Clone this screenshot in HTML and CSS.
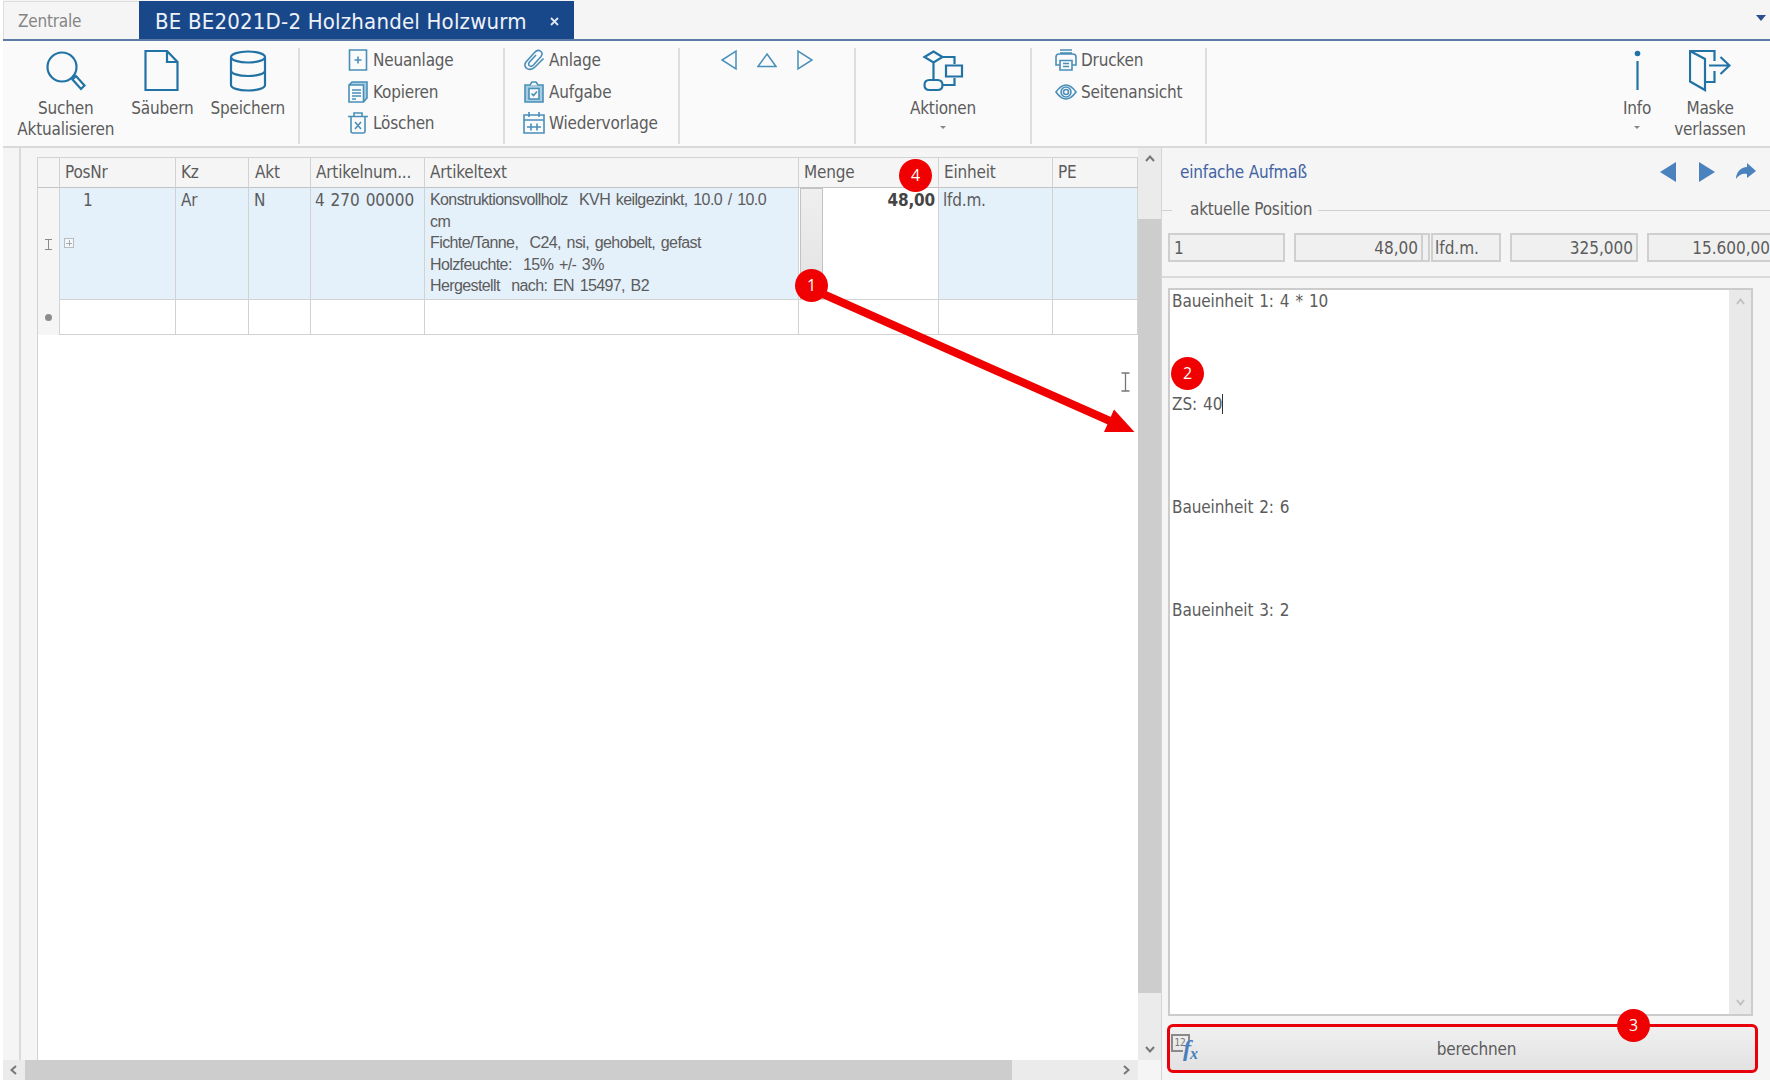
FILE: index.html
```
<!DOCTYPE html>
<html lang="de">
<head>
  <meta charset="UTF-8" />
  <meta name="viewport" content="width=device-width, initial-scale=1.0" />
  <title>BE BE2021D-2 Holzhandel Holzwurm</title>
  <link rel="stylesheet" href="styles.css">
</head>
<body>
  <nav class="tabs">
    <div class="tab">Zentrale</div>
    <div class="tab active"><span>BE BE2021D-2 Holzhandel Holzwurm</span>
      <svg class="close" width="9" height="9" viewBox="0 0 9 9"><path d="M1 1l7 7M8 1l-7 7"/></svg>
    </div>
    <svg class="tabs-menu" width="10" height="6" viewBox="0 0 10 6"><path d="M0 0h10L5 6z"/></svg>
  </nav>

  <header class="toolbar">
    <div class="group group-main">
      <button class="big b-search">
        <svg width="42" height="42" viewBox="0 0 42 42"><circle cx="17" cy="17" r="14.5"/><path d="M27.500 29.500l3.500-3.500 8.500 9.500-3.500 3.500-8.500-9.500z"/></svg>
        <span>Suchen<br>Aktualisieren</span>
      </button>
      <button class="big b-clear">
        <svg width="42" height="42" viewBox="0 0 42 42"><path d="M4.500 1H26l10.500 11v28h-32zM26 1v11h10.500"/></svg>
        <span>Säubern</span>
      </button>
      <button class="big b-save">
        <svg width="42" height="42" viewBox="0 0 42 42"><ellipse cx="21" cy="7" rx="17" ry="5.500"/><path d="M4 7v28c0 3 7 5.500 17 5.500S38 38 38 35V7M4 20.500c0 3 7 5.500 17 5.500s17-2.500 17-5.500"/></svg>
        <span>Speichern</span>
      </button>
    </div>
    <div class="group group-edit">
      <button class="small"><svg width="22" height="22" viewBox="0 0 22 22"><path d="M2.500 1h17v20h-17zM11 7.500v7M7.500 11h7"/></svg>Neuanlage</button>
      <button class="small"><svg width="22" height="22" viewBox="0 0 22 22"><path class="tint" d="M2 4l3-3h15v16l-3 4V4z"/><path d="M2 4h14.500v17H2zM2 4l3-3h15v16l-3.500 4M5 9h9M5 12h9M5 15h9M5 18h4"/></svg>Kopieren</button>
      <button class="small"><svg width="22" height="22" viewBox="0 0 22 22"><path d="M1 4.500h20M7 4V1h8v3M4 5v14q0 2 2 2h10q2 0 2-2V5M8 10l6 7M14 10l-6 7"/></svg>Löschen</button>
    </div>
    <div class="group group-attach">
      <button class="small"><svg width="22" height="22" viewBox="0 0 22 22"><path d="M20.500 9.500L12 18c-5 5-13 1-9-5l8.500-9.500c4-4.500 10-.5 6.500 4L10.500 16c-3 3-6.500 0-4-3L13 6"/></svg>Anlage</button>
      <button class="small"><svg width="22" height="22" viewBox="0 0 22 22"><path class="tint" d="M2 4h18v17H2zM6 8v10h10V8z"/><path d="M2 4h5l2-3h4l2 3h5v17H2zM6 7.500h10v10.500H6zM8.500 12.500l2 2 3.500-4"/></svg>Aufgabe</button>
      <button class="small"><svg width="22" height="22" viewBox="0 0 22 22"><path d="M1 3h20v18H1zM1 8h20M6 0v5M16 0v5M4 15h14M8 11.500v7M14 11.500v7"/></svg>Wiedervorlage</button>
    </div>
    <div class="group group-nav">
      <svg width="16" height="22" viewBox="0 0 16 22"><path d="M15 2v18L1 11z"/></svg>
      <svg width="20" height="22" viewBox="0 0 20 22"><path d="M10 5l9 12.500H1z"/></svg>
      <svg width="16" height="22" viewBox="0 0 16 22"><path d="M1 2v18l14-9z"/></svg>
    </div>
    <div class="group group-action">
      <button class="big">
        <svg width="42" height="42" viewBox="0 0 42 42"><path d="M2.500 7L11.500 1.500 20.500 7l-9 5.500zM20 7h12.500v7M24 15.500h16v11H24zM32.500 28v7H21M11.500 12.500V30M7.500 30h8q5 0 5 5t-5 5h-8q-5 0-5-5t5-5z"/></svg>
        <span>Aktionen</span>
        <i class="caret"></i>
      </button>
    </div>
    <div class="group group-print">
      <button class="small"><svg width="22" height="22" viewBox="0 0 22 22"><path d="M5 1h12M5 4h12M5 16H1V8q0-3 3-3h14q3 0 3 3v8h-4M5 11.500h12V21H5zM8 14.500h6M8 17.500h6"/></svg>Drucken</button>
      <button class="small"><svg width="22" height="22" viewBox="0 0 22 22"><path d="M1 11Q6 4 11 4t10 7q-5 7-10 7T1 11z"/><circle cx="11" cy="11" r="5"/><circle cx="11" cy="11" r="2.500"/></svg>Seitenansicht</button>
    </div>
    <div class="group group-end">
      <button class="big b-info">
        <svg width="42" height="42" viewBox="0 0 42 42"><circle class="dot" cx="21.500" cy="3.500" r="2.800"/><path d="M21.500 11v29"/></svg>
        <span>Info</span>
        <i class="caret"></i>
      </button>
      <button class="big b-leave">
        <svg width="42" height="42" viewBox="0 0 42 42"><path d="M1 1l15 8v31L1 31.500zM1 1h24.500v10M25.500 21v11H17M20 15.500h20M31.500 7l9 8.500-9 8.500"/></svg>
        <span>Maske<br>verlassen</span>
      </button>
    </div>
  </header>

  <main class="content">
    <section class="left">
      <div class="rail"></div>
      <div class="sheet">
        <div class="grid">
          <div class="th"></div>
          <div class="th">PosNr</div>
          <div class="th">Kz</div>
          <div class="th akt">Akt</div>
          <div class="th">Artikelnum...</div>
          <div class="th">Artikeltext</div>
          <div class="th">Menge</div>
          <div class="th">Einheit</div>
          <div class="th">PE</div>

          <div class="mark"><svg width="7" height="11" viewBox="0 0 7 11"><path d="M0 .500h7M0 10.500h7M3.500 0v11"/></svg></div>
          <div class="td pos">1<span class="expand"></span></div>
          <div class="td">Ar</div>
          <div class="td">N</div>
          <div class="td number">4 270 00000</div>
          <div class="td text">
            <p>Konstruktionsvollholz&nbsp; KVH keilgezinkt, 10.0 / 10.0</p>
            <p>cm</p>
            <p>Fichte/Tanne,&nbsp; C24, nsi, gehobelt, gefast</p>
            <p>Holzfeuchte:&nbsp; 15% +/- 3%</p>
            <p>Hergestellt&nbsp; nach: EN 15497, B2</p>
          </div>
          <div class="td menge"><span class="grip"></span><b>48,00</b></div>
          <div class="td unit">lfd.m.</div>
          <div class="td"></div>

          <div class="mark"><span class="bullet"></span></div>
          <div class="td new"></div>
          <div class="td new"></div>
          <div class="td new"></div>
          <div class="td new"></div>
          <div class="td new"></div>
          <div class="td new"></div>
          <div class="td new"></div>
          <div class="td new"></div>
        </div>
      </div>
      <div class="vscroll">
        <svg width="10" height="7" viewBox="0 0 10 7"><path d="M1 6l4-4.500L9 6"/></svg>
        <div class="thumb"></div>
        <svg width="10" height="7" viewBox="0 0 10 7"><path d="M1 1l4 4.500L9 1"/></svg>
      </div>
      <div class="hscroll">
        <svg width="7" height="10" viewBox="0 0 7 10"><path d="M6 1L1.500 5 6 9"/></svg>
        <div class="thumb"></div>
        <svg width="7" height="10" viewBox="0 0 7 10"><path d="M1 1l4.500 4L1 9"/></svg>
      </div>
    </section>

    <aside class="panel">
      <div class="panel-head">
        <h2>einfache Aufmaß</h2>
        <svg width="17" height="20" viewBox="0 0 17 20"><path d="M16 0v20L0 10z"/></svg>
        <svg width="17" height="20" viewBox="0 0 17 20"><path d="M1 0v20l16-10z"/></svg>
        <svg width="20" height="17" viewBox="0 0 20 17"><path d="M11 0l9 8-9 7v-4C6 10 3 12 0 16 0 9 5 4 11 4z"/></svg>
      </div>
      <div class="position">
        <div class="legend">aktuelle Position</div>
        <div class="fields">
          <span class="field f-pos">1</span>
          <span class="field f-menge"><span>48,00</span><i></i></span>
          <span class="field f-unit">lfd.m.</span>
          <span class="field f-price">325,000</span>
          <span class="field f-sum">15.600,00</span>
        </div>
      </div>
      <div class="calc">
        <div class="calc-text">Baueinheit 1: 4 * 10




ZS: 40<i class="cursor"></i>




Baueinheit 2: 6




Baueinheit 3: 2</div>
        <div class="calc-scroll">
          <svg width="9" height="7" viewBox="0 0 9 7"><path d="M1 6l3.500-4.500L8 6"/></svg>
          <svg width="9" height="7" viewBox="0 0 9 7"><path d="M1 1l3.500 4.500L8 1"/></svg>
        </div>
      </div>
      <button class="calculate">
        <svg width="28" height="28" viewBox="0 0 28 28">
          <path class="box" d="M13 18H2V2h17v6"/>
          <text class="num" x="4.500" y="12.500">12</text>
          <text class="fx" x="13" y="23">f</text>
          <text class="fx sub" x="20" y="26">x</text>
        </svg>
        <span>berechnen</span>
      </button>
    </aside>
  </main>

  <!-- Hinweise -->
  <svg class="arrow" width="1770" height="1080" viewBox="0 0 1770 1080">
    <path class="line" d="M814 290L1110 421"/>
    <path class="head" d="M1114 409.500L1134.500 432H1104z"/>
    <path class="ibeam" d="M1121.500 373h3.500l.5 1 .5-1h3.500M1125.500 373v17.500M1121.500 391h3.500l.5-1 .5 1h3.500"/>
  </svg>
  <span class="badge n1">1</span>
  <span class="badge n2">2</span>
  <span class="badge n3">3</span>
  <span class="badge n4">4</span>
</body>
</html>
```
FILE: styles.css
```
* {
  box-sizing: border-box;
}

body {
  margin: 0;
  width: 1770px;
  height: 1080px;
  overflow: hidden;
  position: relative;
  display: flex;
  flex-direction: column;
  border-left: 3px solid #fff;
  background: #f5f5f5;
  color: #5c5c5c;
  font-family: "DejaVu Sans Condensed", "DejaVu Sans", sans-serif;
  font-stretch: condensed;
  font-size: 17px;
  letter-spacing: -0.2px;
}

svg {
  fill: none;
  flex: none;
}

button {
  font: inherit;
  letter-spacing: inherit;
  color: inherit;
  background: none;
  border: none;
  padding: 0;
}

p, h2 {
  margin: 0;
  font-weight: normal;
}

/* tabs */
.tabs {
  height: 41px;
  display: flex;
  align-items: stretch;
  padding-top: 1px;
  border-bottom: 2px solid #5d7ba6;
}

.tab {
  width: 136px;
  padding-left: 14px;
  line-height: 39px;
  color: #858585;
  border-top: 1px solid #ddd;
  border-left: 1px solid #ddd;
}

.tab.active {
  display: flex;
  align-items: center;
  width: 435px;
  padding: 2px 0 0 16px;
  border: none;
  background: #19488a;
  color: #eef2f8;
  font-size: 22px;
  letter-spacing: 0.2px;
  white-space: nowrap;
}

.tab.active span {
  width: 395px;
}

.close {
  stroke: #dfe6f0;
  stroke-width: 1.8;
}

.tabs-menu {
  margin: 14px 4px 0 auto;
  fill: #2a4d8c;
}

/* toolbar */
.toolbar {
  height: 107px;
  display: flex;
  padding: 7px 0 2px;
  background: #fafafa;
  border-bottom: 2px solid #d9d9d9;
}

.toolbar svg {
  stroke: #2273a5;
  stroke-width: 2.2;
}

.group {
  display: flex;
  border-right: 2px solid #dedede;
}

.big {
  display: flex;
  flex-direction: column;
  align-items: center;
  padding-top: 2px;
  line-height: 20.5px;
  text-align: center;
}

.big svg {
  margin-bottom: 6px;
}

.caret {
  width: 0;
  margin-top: 7px;
  border: 3px solid transparent;
  border-top: 3px solid #888;
  border-bottom: none;
}

.group-main {
  width: 297px;
  padding-left: 1px;
}

.b-search { width: 124px; }
.b-clear { width: 70px; }
.b-save { width: 101px; }

.small {
  display: flex;
  align-items: center;
  gap: 4px;
  height: 31.5px;
  padding-bottom: 7px;
}

.toolbar .small svg {
  stroke: #4a8fb9;
  stroke-width: 1.6;
}

.toolbar .small .tint {
  fill: #a9cde0;
  fill-rule: evenodd;
  stroke: none;
}

.group-edit, .group-attach, .group-print {
  flex-direction: column;
  align-items: flex-start;
}

.group-edit {
  width: 205px;
  padding-left: 47px;
}

.group-attach {
  width: 175px;
  padding-left: 18px;
}

.group-nav {
  width: 176px;
  padding-left: 41px;
  gap: 20px;
}

.toolbar .group-nav svg {
  margin-top: 1px;
  stroke: #4a8fb9;
  stroke-width: 1.5;
}

.group-action {
  width: 176px;
  justify-content: center;
}

.group-print {
  width: 175px;
  padding-left: 23px;
}

.group-end {
  margin-left: auto;
  border: none;
}

.b-info { width: 54px; }

.b-leave {
  width: 92px;
  margin-right: 14px;
}

.toolbar .dot {
  fill: #2273a5;
  stroke: none;
}

/* document area */
.content {
  flex: 1;
  display: flex;
  min-height: 0;
}

.left {
  width: 1158px;
  display: grid;
  grid-template-columns: 18px 1117px 23px;
  grid-template-rows: 912px 20px;
}

.rail {
  border-right: 2px solid #dadada;
}

.sheet {
  padding: 9px 0 0 16px;
}

.grid {
  height: 903px;
  display: grid;
  grid-template-columns: 22px 116px 73px 62px 114px 374px 140px 114px 1fr;
  grid-template-rows: 30px 112px 35px;
  background: #fff;
  border-left: 1px solid #d2d2d2;
  border-top: 1px solid #d2d2d2;
}

.th, .td {
  padding: 0 0 0 5px;
  border-right: 1px solid #d2d2d2;
  border-bottom: 1px solid #d2d2d2;
  white-space: nowrap;
  overflow: hidden;
}

.th {
  line-height: 28px;
  background: #f5f5f5;
  border-bottom-color: #c4c4c4;
}

.th.akt {
  padding-left: 6px;
}

.td {
  position: relative;
  line-height: 25px;
  background: #e4f0fa;
}

.td.new {
  background: #fff;
}

.td.pos {
  padding-left: 23px;
}

.td.number {
  padding-left: 4px;
  letter-spacing: 0;
  word-spacing: 1px;
}

.td.unit {
  padding-left: 4px;
}

.mark {
  display: flex;
  align-items: center;
  justify-content: center;
  background: #f5f5f5;
  border-right: 1px solid #d2d2d2;
}

.mark svg {
  stroke: #8a8a8a;
}

.bullet {
  width: 7px;
  height: 7px;
  border-radius: 50%;
  background: #8c8c8c;
}

.expand {
  position: absolute;
  left: 4px;
  top: 50px;
  width: 10px;
  height: 10px;
  border: 1px solid #b5bcc2;
  background:
    linear-gradient(#a5abb0, #a5abb0) center / 6px 1px no-repeat,
    linear-gradient(#a5abb0, #a5abb0) center / 1px 6px no-repeat, #f4f7f9;
}

.td.text {
  padding-top: 1px;
  font-family: "Liberation Sans", Arial, sans-serif;
  font-size: 16px;
  line-height: 21.600px;
  letter-spacing: -0.600px;
  word-spacing: 1.8px;
}

.td.menge {
  display: flex;
  justify-content: space-between;
  padding: 0 3px 0 1px;
  background: #fff;
}

.td b {
  color: #444;
}

.grip {
  width: 23px;
  border: 1px solid #c2c2c2;
  background: linear-gradient(#efefef, #e2e2e2);
}

.vscroll, .hscroll {
  display: flex;
  align-items: center;
  background: #ebebeb;
}

.vscroll svg, .hscroll svg {
  stroke: #777;
  stroke-width: 2;
}

.vscroll {
  flex-direction: column;
  padding: 7px 0 7px;
}

.vscroll .thumb {
  width: 23px;
  height: 774px;
  margin: 57px 0 auto;
  background: #cdcdcd;
}

.hscroll {
  grid-column: 1 / 3;
  padding: 0 8px 0 7px;
}

.hscroll .thumb {
  width: 987px;
  height: 20px;
  margin: 0 auto 0 8px;
  background: #cdcdcd;
}

/* right side */
.panel {
  flex: 1;
  min-width: 0;
  border-left: 1px solid #d4d4d4;
}

.panel-head {
  height: 50px;
  display: flex;
  align-items: center;
  padding: 0 14px 3px 18px;
}

.panel-head h2 {
  margin-right: auto;
  font-size: 17px;
  color: #4263a3;
}

.panel-head svg {
  margin-left: 21px;
  fill: #4a82bd;
}

.position {
  height: 80px;
  border-bottom: 2px solid #dadada;
}

.legend {
  display: flex;
  align-items: center;
  height: 21px;
}

.legend::before, .legend::after {
  content: "";
  width: 10px;
  height: 1px;
  margin: 3px 18px 0 0;
  background: #d0d0d0;
}

.legend::after {
  flex: 1;
  margin: 3px 0 0 6px;
}

.fields {
  display: flex;
  padding: 14px 0 0 6px;
}

.field {
  flex: none;
  display: flex;
  height: 29px;
  margin-right: 9px;
  padding: 0 4px;
  border: 2px solid #cfcfcf;
  background: #f0f0f0;
  line-height: 26px;
  letter-spacing: 0;
}

.f-pos { width: 117px; }

.f-menge {
  width: 136px;
  margin-right: 1px;
  padding: 0;
  justify-content: flex-end;
}

.f-menge i {
  width: 7px;
  margin-left: 3px;
  border-left: 2px solid #cfcfcf;
}

.f-unit {
  width: 70px;
  padding-left: 2px;
}

.f-price {
  width: 128px;
  justify-content: flex-end;
  padding-right: 3px;
}

.f-sum {
  width: 140px;
  justify-content: flex-end;
  padding-right: 15px;
}

.calc {
  display: flex;
  width: 585px;
  height: 728px;
  margin: 10px 0 0 6px;
  border: 2px solid #ccc;
  background: #fff;
}

.calc-text {
  flex: 1;
  padding: 1px 0 0 2px;
  line-height: 20.600px;
  letter-spacing: -0.1px;
  word-spacing: 1.2px;
  white-space: pre;
}

.cursor {
  display: inline-block;
  width: 1px;
  height: 20px;
  background: #333;
  vertical-align: -4px;
}

.calc-scroll {
  width: 22px;
  display: flex;
  flex-direction: column;
  align-items: center;
  justify-content: space-between;
  padding: 8px 0;
  background: #e9e9e9;
}

.calc-scroll svg {
  stroke: #c2c2c2;
  stroke-width: 2;
}

.calculate {
  display: flex;
  align-items: center;
  width: 591px;
  height: 49px;
  margin: 8px 0 0 5px;
  padding: 0;
  border: 3px solid #e8000b;
  border-radius: 6px;
  background: linear-gradient(#f0f0f0, #e2e2e2);
}

.calculate span {
  flex: 1;
}

.calculate svg {
  margin-bottom: 3px;
}

.calculate .box {
  stroke: #8a8a8a;
  stroke-width: 2;
}

.num {
  fill: #777;
  font-size: 10px;
}

.fx {
  fill: #4a7ebb;
  font: italic bold 24px "Liberation Serif", serif;
}

.fx.sub {
  font-size: 16px;
}

/* annotations */
.arrow {
  position: absolute;
  left: -3px;
  top: 0;
}

.arrow .line {
  stroke: #f00000;
  stroke-width: 8;
}

.arrow .head {
  fill: #f00000;
}

.arrow .ibeam {
  stroke: #777;
  stroke-width: 1.3;
}

.badge {
  position: absolute;
  width: 33px;
  height: 33px;
  border-radius: 50%;
  background: #f00000;
  color: #fff;
  font: 16px/33px "Open Sans", "Noto Sans", sans-serif;
  letter-spacing: 0;
  text-align: center;
}

.n1 { left: 792px; top: 269px; }
.n2 { left: 1168px; top: 357px; }
.n3 { left: 1614px; top: 1009px; }
.n4 { left: 896px; top: 159px; }
```
